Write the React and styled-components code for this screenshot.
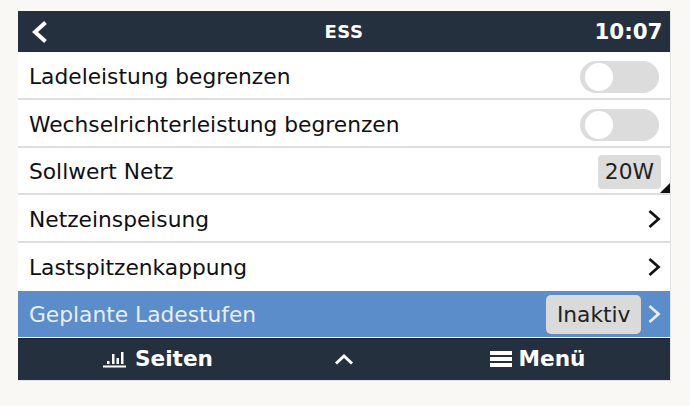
import React from "react";
import styled, { createGlobalStyle } from "styled-components";

const Global = createGlobalStyle`
  html, body { margin: 0; padding: 0; background: #f9f8f5; }
  body { font-family: "DejaVu Sans", sans-serif; }
`;

const Page = styled.div`
  width: 690px;
  height: 406px;
  padding: 11px 0 0 18px;
  box-sizing: border-box;
`;

const Panel = styled.div`
  width: 653px;
  height: 370px;
  display: flex;
  flex-direction: column;
  background: #fff;
  border-right: 1px solid #e4e4e2;
  border-bottom: 1px solid #e4e4e2;
  box-sizing: border-box;
`;

const Header = styled.header`
  height: 41px;
  flex: none;
  display: grid;
  grid-template-columns: 1fr auto 1fr;
  align-items: center;
  padding: 0 8px 0 12px;
  background: #25303f;
  color: #fff;
  font-weight: 700;
`;

const Back = styled.svg`
  width: 20px;
  height: 26px;
  display: block;
`;

const Title = styled.div`
  font-size: 18px;
  letter-spacing: 0.6px;
  margin-right: 4px;
`;

const Clock = styled.div`
  font-size: 21.4px;
  justify-self: end;
  margin-right: -0.5px;
`;

const Row = styled.div`
  height: ${(p) => p.$h}px;
  flex: none;
  display: flex;
  align-items: center;
  justify-content: space-between;
  padding: ${(p) => (p.$active || p.$last ? "0" : "2px")} 8px 0 11px;
  box-sizing: border-box;
  position: relative;
  font-size: 21.75px;
  color: ${(p) => (p.$active ? "#e9eff7" : "#101010")};
  background: ${(p) => (p.$active ? "#5a8dca" : "#fff")};
  border-bottom: ${(p) => (p.$active || p.$last ? "none" : "2px solid #dedede")};
`;

const Toggle = styled.div`
  width: 79px;
  height: 32px;
  margin: 2px 3px 0 0;
  border-radius: 16px;
  background: #dcdcdc;
  display: flex;
  align-items: center;
  padding-left: 5px;
  box-sizing: border-box;
`;

const Knob = styled.div`
  width: 28px;
  height: 28px;
  border-radius: 50%;
  background: #fff;
`;

const Value = styled.div`
  height: 34px;
  padding: 0 7px;
  margin-right: 1px;
  display: flex;
  align-items: center;
  border-radius: 4px;
  background: #dcdcdc;
  color: #222;
`;

const Corner = styled.div`
  position: absolute;
  right: 0;
  bottom: 0;
  width: 0;
  height: 0;
  border-style: solid;
  border-width: 0 0 10px 10px;
  border-color: transparent transparent #111 transparent;
`;

const Chevron = styled.svg`
  width: 16px;
  height: 22px;
  display: block;
`;

const Trailing = styled.div`
  display: flex;
  align-items: center;
  gap: 5px;
`;

const Status = styled(Value)`
  height: 39px;
  padding: 0 10.5px;
  margin-right: 0;
  border-radius: 5px;
  background: #dadada;
`;

const Footer = styled.footer`
  flex: 1;
  margin-top: 1px;
  padding-bottom: 2px;
  display: grid;
  grid-template-columns: 278px 96px 1fr;
  align-items: center;
  background: #25303f;
  color: #fff;
  font-size: 21.6px;
  font-weight: 700;
  border-top: 1px solid #1b2430;
`;

const FootItem = styled.div`
  display: flex;
  align-items: center;
  justify-content: center;
  gap: ${(p) => p.$gap || 9}px;
  padding-left: ${(p) => p.$inset || 0}px;
`;

const BackIcon = () => (
  <Back viewBox="0 0 20 26">
    <path d="M15.500 3.500 L5 13 L15.500 22.500" fill="none" stroke="#fff" strokeWidth="4" />
  </Back>
);

const Next = ({ color = "#111" }) => (
  <Chevron viewBox="0 0 16 22">
    <path d="M3.500 3 L12.500 11 L3.500 19" fill="none" stroke={color} strokeWidth="2.800" />
  </Chevron>
);

const Bars = () => (
  <svg width="23" height="18" viewBox="0 0 23 18">
    <path d="M0 15.500h23v2H0zM4 11h2.500v3H4zM9 4h2.500v10H9zM13.500 8H16v6h-2.500zM18 2h2.500v12H18z" fill="#fff" />
  </svg>
);

const Up = () => (
  <svg width="20" height="12" viewBox="0 0 20 12">
    <path d="M2 10.500 L10 3 L18 10.500" fill="none" stroke="#fff" strokeWidth="3" />
  </svg>
);

const Burger = () => (
  <svg width="22" height="16" viewBox="0 0 22 16">
    <path d="M0 0h22v4H0zM0 6h22v4H0zM0 12h22v4H0z" fill="#fff" />
  </svg>
);

export default function App() {
  return (
    <Page>
      <Global />
      <Panel>
        <Header>
          <BackIcon />
          <Title>ESS</Title>
          <Clock>10:07</Clock>
        </Header>
        <Row $h={48}>
          Ladeleistung begrenzen
          <Toggle><Knob /></Toggle>
        </Row>
        <Row $h={48}>
          Wechselrichterleistung begrenzen
          <Toggle><Knob /></Toggle>
        </Row>
        <Row $h={47}>
          Sollwert Netz
          <Value>20W</Value>
          <Corner />
        </Row>
        <Row $h={48}>
          Netzeinspeisung
          <Next />
        </Row>
        <Row $h={48} $last>
          Lastspitzenkappung
          <Next />
        </Row>
        <Row $h={46} $active>
          Geplante Ladestufen
          <Trailing>
            <Status>Inaktiv</Status>
            <Next color="#e9eff7" />
          </Trailing>
        </Row>
        <Footer>
          <FootItem $inset={2}><Bars />Seiten</FootItem>
          <FootItem><Up /></FootItem>
          <FootItem $inset={13} $gap={7}><Burger />Menü</FootItem>
        </Footer>
      </Panel>
    </Page>
  );
}
